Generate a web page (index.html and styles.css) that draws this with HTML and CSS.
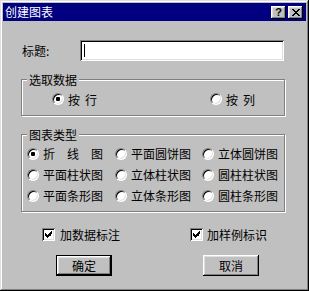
FILE: index.html
```html
<!DOCTYPE html>
<html lang="zh-CN">

<head>
    <meta charset="UTF-8">
    <title>创建图表</title>
    <link rel="stylesheet" href="styles.css">
</head>

<body>
    <div class="window">
        <div class="titlebar">
            <span class="title">创建图表</span>
            <div class="title-buttons">
                <button class="tb-btn help">?</button>
                <button class="tb-btn close">
                    <svg width="8" height="7" viewBox="0 0 8 7" shape-rendering="crispEdges">
                        <path d="M0 0h2v1h-2zM6 0h2v1h-2zM1 1h2v1h-2zM5 1h2v1h-2zM2 2h4v1h-4zM3 3h2v1h-2zM2 4h4v1h-4zM1 5h2v1h-2zM5 5h2v1h-2zM0 6h2v1h-2zM6 6h2v1h-2z" fill="#000"/>
                    </svg>
                </button>
            </div>
        </div>

        <div class="content">
            <div class="name-row">
                <label class="name-label" for="chartTitle">标题:</label>
                <div class="textbox" id="chartTitle"><span class="caret"></span></div>
            </div>

            <fieldset class="group group-data">
                <legend>选取数据</legend>
                <div class="data-options">
                    <label class="option"><span class="radio checked"></span><span class="spread w29">按行</span></label>
                    <label class="option"><span class="radio"></span><span class="spread w29">按列</span></label>
                </div>
            </fieldset>

            <fieldset class="group group-type">
                <legend>图表类型</legend>
                <div class="type-grid">
                    <label class="option"><span class="radio checked"></span><span class="spread w60">折线图</span></label>
                    <label class="option"><span class="radio"></span>平面圆饼图</label>
                    <label class="option"><span class="radio"></span>立体圆饼图</label>
                    <label class="option"><span class="radio"></span>平面柱状图</label>
                    <label class="option"><span class="radio"></span>立体柱状图</label>
                    <label class="option"><span class="radio"></span>圆柱柱状图</label>
                    <label class="option"><span class="radio"></span>平面条形图</label>
                    <label class="option"><span class="radio"></span>立体条形图</label>
                    <label class="option"><span class="radio"></span>圆柱条形图</label>
                </div>
            </fieldset>

            <div class="check-row">
                <label class="check-option first">
                    <span class="checkbox">
                        <svg width="7" height="7" viewBox="0 0 7 7" shape-rendering="crispEdges">
                            <path d="M6 0h1v3h-1zM5 1h1v4h-1zM4 2h1v3h-1zM0 2h1v3h-1zM1 3h1v3h-1zM3 3h1v3h-1zM2 4h1v3h-1z" fill="#000"/>
                        </svg>
                    </span>加数据标注
                </label>
                <label class="check-option second">
                    <span class="checkbox">
                        <svg width="7" height="7" viewBox="0 0 7 7" shape-rendering="crispEdges">
                            <path d="M6 0h1v3h-1zM5 1h1v4h-1zM4 2h1v3h-1zM0 2h1v3h-1zM1 3h1v3h-1zM3 3h1v3h-1zM2 4h1v3h-1z" fill="#000"/>
                        </svg>
                    </span>加样例标识
                </label>
            </div>

            <div class="button-row">
                <button class="push-btn default">确定</button>
                <button class="push-btn">取消</button>
            </div>
        </div>
    </div>
</body>

</html>
```

FILE: styles.css
```css
* {
    box-sizing: border-box;
}

body {
    margin: 0;
    font-family: "Noto Sans CJK SC", "Liberation Sans", sans-serif;
    font-size: 12px;
    color: #000;
    background-color: #c0c0c0;
}

.window {
    width: 309px;
    height: 291px;
    padding: 3px;
    background-color: #c0c0c0;
    box-shadow: inset -1px -1px #000, inset 1px 1px #dfdfdf,
        inset -2px -2px #808080, inset 2px 2px #fff;
}

.titlebar {
    height: 18px;
    padding: 0 3px 0 2px;
    display: flex;
    align-items: center;
    justify-content: space-between;
    background-color: #000080;
    color: #fff;
}

.title {
    line-height: 18px;
}

.title-buttons {
    display: flex;
    gap: 2px;
}

.tb-btn {
    width: 15px;
    height: 13px;
    padding: 0;
    border: none;
    display: flex;
    align-items: center;
    justify-content: center;
    background-color: #c0c0c0;
    box-shadow: inset -1px -1px #000, inset 1px 1px #fff,
        inset -2px -2px #808080, inset 2px 2px #dfdfdf;
    font: bold 11px "Liberation Sans", sans-serif;
    color: #000;
}

.content {
    padding: 0 0 0 18px;
}

.name-row {
    margin-top: 19px;
    height: 21px;
    display: flex;
    align-items: center;
}

.name-label {
    width: 59px;
    padding-left: 1px;
}

.textbox {
    width: 204px;
    height: 21px;
    padding: 4px 0 0 4px;
    background-color: #fff;
    box-shadow: inset 1px 1px #808080, inset -1px -1px #fff,
        inset 2px 2px #000, inset -2px -2px #dfdfdf;
}

.caret {
    display: block;
    width: 1px;
    height: 13px;
    background-color: #000;
}

/* group boxes */
.group {
    width: 264px;
    margin: 11px 0 0 0;
    padding: 0;
    border: 1px solid #808080;
    box-shadow: inset 1px 1px #fff, 1px 1px #fff;
}

.group legend {
    margin-left: 5px;
    padding: 0 2px;
    line-height: 15px;
    background-color: #c0c0c0;
}

.data-options {
    height: 14px;
    margin: 5px 0 9px 0;
    padding-left: 30px;
    display: flex;
    gap: 113px;
}

.type-grid {
    padding: 1px 0 5px 5px;
    display: grid;
    grid-template-columns: 88px 87px auto;
    grid-auto-rows: 21px;
}

.option {
    display: flex;
    align-items: center;
    gap: 4px;
    white-space: nowrap;
}

.spread {
    display: inline-block;
    text-align: justify;
    text-align-last: justify;
}

.w29 {
    width: 29px;
}

.w60 {
    width: 60px;
}

.radio {
    flex: none;
    width: 12px;
    height: 12px;
    border-radius: 50%;
    border: 1px solid;
    border-color: #808080 #fff #fff #808080;
    background-color: #fff;
    box-shadow: inset 1px 1px #000, inset -1px -1px #dfdfdf;
    display: flex;
    align-items: center;
    justify-content: center;
}

.radio.checked::after {
    content: "";
    width: 4px;
    height: 4px;
    border-radius: 1px;
    background-color: #000;
}

/* checkboxes */
.check-row {
    height: 14px;
    margin-top: 15px;
    display: flex;
}

.check-option {
    display: flex;
    align-items: center;
    gap: 5px;
    white-space: nowrap;
}

.check-option.first {
    margin-left: 21px;
}

.check-option.second {
    margin-left: 70px;
    gap: 4px;
}

.checkbox {
    width: 13px;
    height: 13px;
    display: flex;
    align-items: center;
    justify-content: center;
    background-color: #fff;
    box-shadow: inset 1px 1px #808080, inset -1px -1px #fff,
        inset 2px 2px #000, inset -2px -2px #dfdfdf;
}

/* push buttons */
.button-row {
    margin-top: 14px;
    padding-left: 35px;
    display: flex;
    gap: 91px;
}

.push-btn {
    width: 56px;
    height: 21px;
    padding: 0;
    border: none;
    background-color: #c0c0c0;
    font-family: "Noto Sans CJK SC", sans-serif;
    font-size: 12px;
    color: #000;
    box-shadow: inset -1px -1px #000, inset 1px 1px #fff,
        inset -2px -2px #808080, inset 2px 2px #dfdfdf;
}

.push-btn.default {
    border: 1px solid #000;
    box-shadow: inset -1px -1px #000, inset 1px 1px #fff,
        inset -2px -2px #808080, inset 2px 2px #dfdfdf;
}
```
